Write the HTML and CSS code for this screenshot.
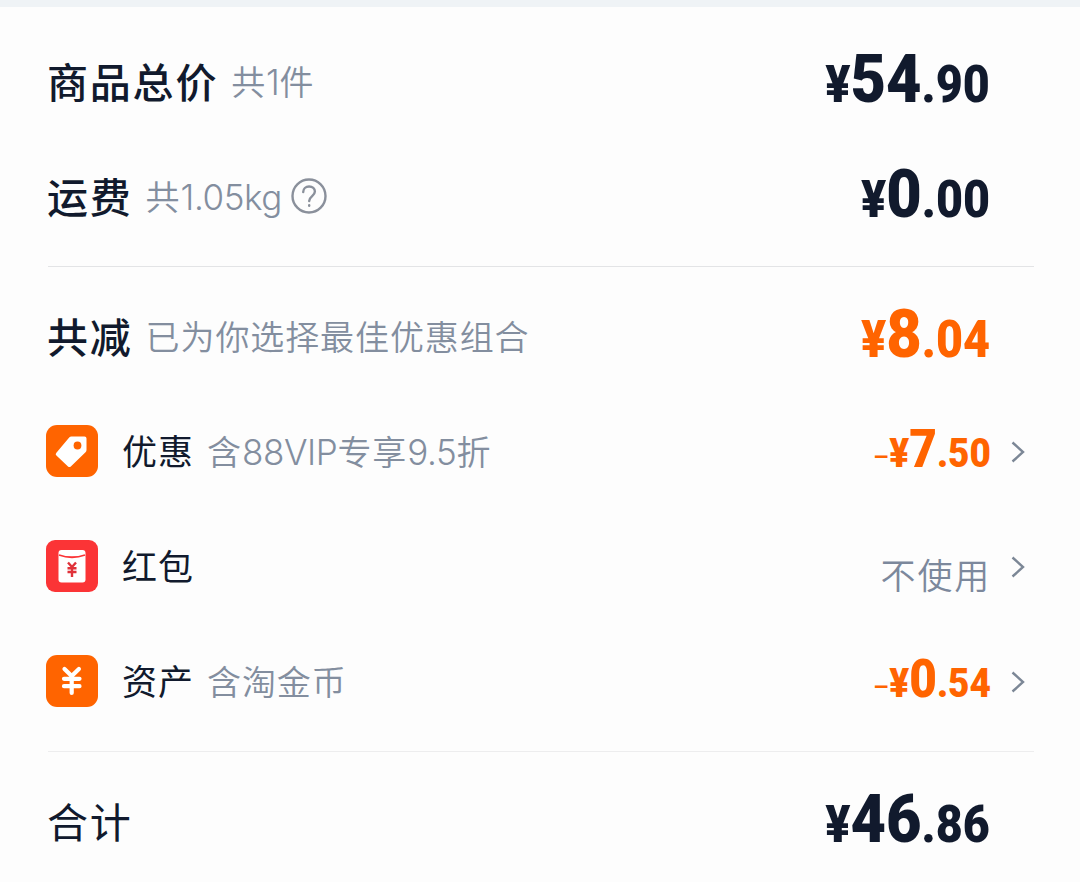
FILE: index.html
```html
<!DOCTYPE html>
<html lang="zh-CN">
<head>
    <meta charset="UTF-8">
    <meta name="viewport" content="width=device-width, initial-scale=1.0">
    <title>合计</title>
    <link rel="stylesheet" href="styles.css">
</head>
<body>
    <div class="container">
        <div class="fila">
            <span class="titulo">商品总价</span>
            <span class="nota">共<span class="latin">1</span>件</span>
            <span class="precio"><small>¥</small>54<small>.90</small></span>
        </div>
        <div class="fila">
            <span class="titulo">运费</span>
            <span class="nota">共<span class="latin">1.05kg</span></span>
            <svg class="ayuda" viewBox="0 0 36 36">
                <circle cx="18" cy="18" r="16.5"/>
                <path d="M12.2 14c0-3.2 2.5-5.5 5.9-5.5s5.8 2.1 5.8 5.1c0 4.4-5.7 4.6-5.7 9.4"/>
                <path d="M18.2 27.2v.6"/>
            </svg>
            <span class="precio"><small>¥</small>0<small>.00</small></span>
        </div>
        <div class="linea"></div>
        <div class="fila">
            <span class="titulo">共减</span>
            <span class="nota">已为你选择最佳优惠组合</span>
            <span class="precio naranja"><small>¥</small>8<small>.04</small></span>
        </div>
        <div class="fila item">
            <svg class="icono" viewBox="0 0 52 52">
                <rect width="52" height="52" rx="11" fill="#ff6400"/>
                <path d="M25.5 11.5H38.5a2 2 0 0 1 2 2V25a3 3 0 0 1-1 2.2L24.8 41.4a2 2 0 0 1-2.8 0L10.4 30.6a2 2 0 0 1 0-2.9L23.2 12.5a3 3 0 0 1 2.3-1z" fill="#fff"/>
                <circle cx="31.5" cy="20.5" r="3.9" fill="#ff6400"/>
            </svg>
            <span class="nombre">优惠</span>
            <span class="nota">含<span class="latin">88VIP</span>专享<span class="latin">9.5</span>折</span>
            <span class="precio chico naranja"><i>–</i><small>¥</small>7<small>.50</small></span>
            <svg class="flecha" viewBox="0 0 14 24"><path d="M1.5 2.5L12 12L1.5 21.5"/></svg>
        </div>
        <div class="fila item">
            <svg class="icono" viewBox="0 0 52 52">
                <rect width="52" height="52" rx="9" fill="#fb3436"/>
                <rect x="12.5" y="10" width="27" height="32.5" rx="3" fill="#fff"/>
                <path d="M13 15q13 4.5 26 0" fill="none" stroke="#fb3436" stroke-width="1.8"/>
                <path d="M22 22.500l4 4.500 4-4.500M21.500 28.200h9M21.500 32h9M26 27v10" fill="none" stroke="#e0323a" stroke-width="2.4"/>
            </svg>
            <span class="nombre">红包</span>
            <span class="valor">不使用</span>
            <svg class="flecha" viewBox="0 0 14 24"><path d="M1.5 2.5L12 12L1.5 21.5"/></svg>
        </div>
        <div class="fila item">
            <svg class="icono" viewBox="0 0 52 52">
                <rect width="52" height="52" rx="11" fill="#ff6400"/>
                <path d="M18.5 14l7.200 7 7.200-7M18 23.800h15.500M18 31.200h15.500M25.700 21v17" fill="none" stroke="#fff" stroke-width="4.2" stroke-linecap="round"/>
            </svg>
            <span class="nombre">资产</span>
            <span class="nota">含淘金币</span>
            <span class="precio chico naranja"><i>–</i><small>¥</small>0<small>.54</small></span>
            <svg class="flecha" viewBox="0 0 14 24"><path d="M1.5 2.5L12 12L1.5 21.5"/></svg>
        </div>
        <div class="linea suave"></div>
        <div class="fila">
            <span class="titulo regular">合计</span>
            <span class="precio"><small>¥</small>46<small>.86</small></span>
        </div>
    </div>
</body>
</html>
```
FILE: styles.css
```css
body {
    margin: 0;
    padding: 0;
    background: #fdfdfd;
    border-top: 7px solid #eff3f6;
    font-family: "Inter", "Noto Sans CJK SC", sans-serif;
    color: #111a2d;
}
.container {
    padding: 17px 46px 0 47px;
}
.fila {
    display: flex;
    align-items: center;
    height: 115px;
    padding-right: 44px;
    white-space: nowrap;
}
.item {
    padding-right: 9px;
    margin-left: -1px;
}
.linea {
    height: 1px;
    margin: 12px 0 12px 1px;
    background: #e3e4e6;
}
.suave {
    background: #ededee;
}
.titulo, .nombre {
    padding-bottom: 4px;
}
.titulo {
    font-size: 41px;
    font-weight: 500;
    letter-spacing: 1.8px;
}
.regular {
    font-weight: 400;
}
.nombre {
    font-size: 35px;
    letter-spacing: 1px;
    margin-left: 24px;
}
.nota {
    font-size: 34px;
    font-weight: 350;
    letter-spacing: 0.9px;
    margin-left: 13px;
    padding-bottom: 2px;
    color: #838e9f;
}
.latin {
    font-size: 35px;
    letter-spacing: -0.4px;
}
.valor {
    font-size: 35px;
    font-weight: 350;
    letter-spacing: 1.8px;
    margin-left: auto;
    padding-top: 14px;
    color: #7c889c;
}
.ayuda {
    width: 36px;
    height: 36px;
    margin-left: 9px;
    margin-bottom: 2px;
    fill: none;
    stroke: #8a909b;
    stroke-width: 2.4;
    stroke-linecap: round;
}
.icono {
    width: 52px;
    height: 52px;
    margin-bottom: 2px;
}
.flecha {
    width: 14px;
    height: 24px;
    margin-left: 20px;
    fill: none;
    stroke: #7c8796;
    stroke-width: 2.4;
}
.precio {
    margin-left: auto;
    font-family: Roboto, sans-serif;
    font-size: 67px;
    font-weight: 900;
    line-height: 78px;
    transform: scaleX(0.915);
    transform-origin: right;
}
.precio small {
    font-size: 51px;
}
.chico {
    padding-top: 4px;
    font-size: 53px;
    transform: scaleX(0.9);
}
.chico small {
    font-size: 41px;
}
.chico i {
    font-size: 28px;
    font-style: normal;
    font-weight: 500;
}
.naranja {
    color: #ff6400;
}
```
